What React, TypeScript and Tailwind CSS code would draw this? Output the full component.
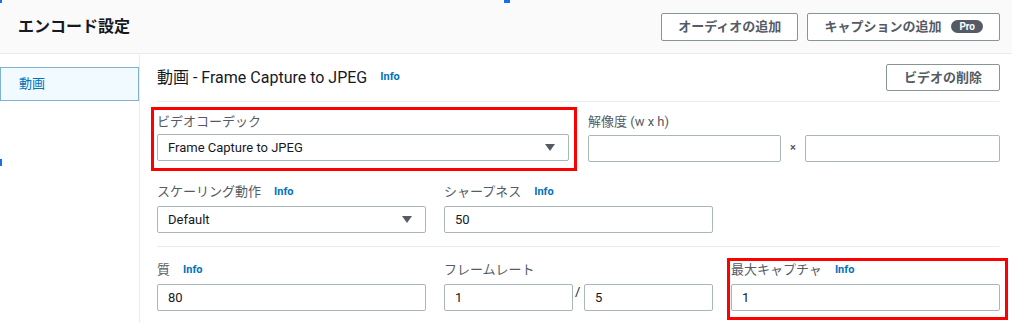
import React from "react";

const font = "font-['Roboto','Noto_Sans_CJK_JP',sans-serif]";

function Info() {
  return <span className="text-[11px] font-bold text-[#0073bb]">Info</span>;
}

function Label({ text, info }: { text: string; info?: boolean }) {
  return (
    <div className="flex h-[20px] items-center gap-[13px] text-[13px] leading-none text-[#545b64]">
      <span>{text}</span>
      {info && <Info />}
    </div>
  );
}

function Input({ value, select, className = "" }: { value?: string; select?: boolean; className?: string }) {
  return (
    <div
      className={`flex h-[27px] items-center justify-between rounded-[2px] border border-[#aab7b8] bg-white pl-[10px] pr-[13px] text-[13px] text-[#16191f] ${className}`}
    >
      <span>{value}</span>
      {select && (
        <svg width="10" height="7" viewBox="0 0 10 7">
          <path d="M0 0h10L5 7z" fill="#545b64" />
        </svg>
      )}
    </div>
  );
}

function Button({ children }: { children: React.ReactNode }) {
  return (
    <div className="flex h-[28px] items-center justify-center gap-[10px] rounded-[2px] border border-[#879596] bg-white px-[16px] text-[13px] font-bold text-[#545b64]">
      {children}
    </div>
  );
}

export default function App() {
  return (
    <div className={`relative h-[323px] w-[1012px] overflow-hidden bg-white ${font}`}>
      {/* header */}
      <div className="flex h-[54px] items-center justify-between border-b border-[#eaeded] bg-[#fafafa] pl-[18px] pr-[12px]">
        <h1 className="pt-[1px] text-[16px] font-bold text-[#16191f]">エンコード設定</h1>
        <div className="flex gap-[9px]">
          <Button>オーディオの追加</Button>
          <Button>
            キャプションの追加
            <span className="flex h-[13px] items-center rounded-full bg-[#545b64] px-[8px] text-[10px] font-bold leading-none text-white">
              Pro
            </span>
          </Button>
        </div>
      </div>

      <div className="flex">
        {/* sidebar */}
        <div className="h-[269px] w-[140px] shrink-0 border-r border-[#eaeded] pt-[13px]">
          <div className="flex h-[34px] items-center border border-[#7fb1d3] bg-[#f1faff] pl-[18px] text-[13px] text-[#0073bb]">
            動画
          </div>
        </div>

        {/* content */}
        <div className="flex-1 pl-[17px] pr-[12px]">
          <div className="flex h-[48px] items-center justify-between border-b border-[#eaeded]">
            <div className="flex items-center gap-[13px]">
              <span className="text-[16px] text-[#16191f]">動画 - Frame Capture to JPEG</span>
              <Info />
            </div>
            <div className="flex h-[27px] w-[114px] items-center justify-center rounded-[2px] border border-[#879596] text-[13px] font-bold text-[#545b64]">
              ビデオの削除
            </div>
          </div>

          <div className="border-b border-[#eaeded] pt-[9px] pb-[13px]">
            <div className="grid grid-cols-2 gap-x-[19px]">
              <div className="relative">
                <Label text="ビデオコーデック" />
                <Input value="Frame Capture to JPEG" select className="mt-[3px]" />
                <div className="pointer-events-none absolute -top-[4px] -right-[8px] -bottom-[9px] -left-[6px] border-[3px] border-[#ff0000]" />
              </div>
              <div>
                <Label text="解像度 (w x h)" />
                <div className="mt-[4px] flex items-center">
                  <Input className="w-[193px]" />
                  <span className="w-[24px] text-center text-[11px] font-bold text-[#545b64]">×</span>
                  <Input className="flex-1" />
                </div>
              </div>
            </div>

            <div className="mt-[19px] grid grid-cols-3 gap-x-[18px]">
              <div>
                <Label text="スケーリング動作" info />
                <Input value="Default" select className="mt-[5px]" />
              </div>
              <div>
                <Label text="シャープネス" info />
                <Input value="50" className="mt-[5px]" />
              </div>
            </div>
          </div>

          <div className="border-b border-[#eaeded] pt-[12px] pb-[13px]">
            <div className="grid grid-cols-3 gap-x-[18px]">
              <div>
                <Label text="質" info />
                <Input value="80" className="mt-[5px]" />
              </div>
              <div>
                <Label text="フレームレート" />
                <div className="mt-[5px] flex items-start">
                  <Input value="1" className="w-[129px]" />
                  <span className="w-[11px] pl-[2px] text-[13px] leading-[16px] text-[#16191f]">/</span>
                  <Input value="5" className="flex-1" />
                </div>
              </div>
              <div className="relative">
                <Label text="最大キャプチャ" info />
                <Input value="1" className="mt-[5px]" />
                <div className="pointer-events-none absolute -top-[1px] -right-[8px] -bottom-[9px] -left-[4px] border-[3px] border-[#ff0000]" />
              </div>
            </div>
          </div>
        </div>
      </div>

      {/* stray selection handles */}
      <div className="absolute left-0 top-0 h-[3px] w-[2px] bg-[#1a6fe8]" />
      <div className="absolute left-[504px] top-0 h-[3px] w-[6px] bg-[#1a6fe8]" />
      <div className="absolute left-0 top-[159px] h-[7px] w-[2px] bg-[#1a6fe8]" />
    </div>
  );
}
